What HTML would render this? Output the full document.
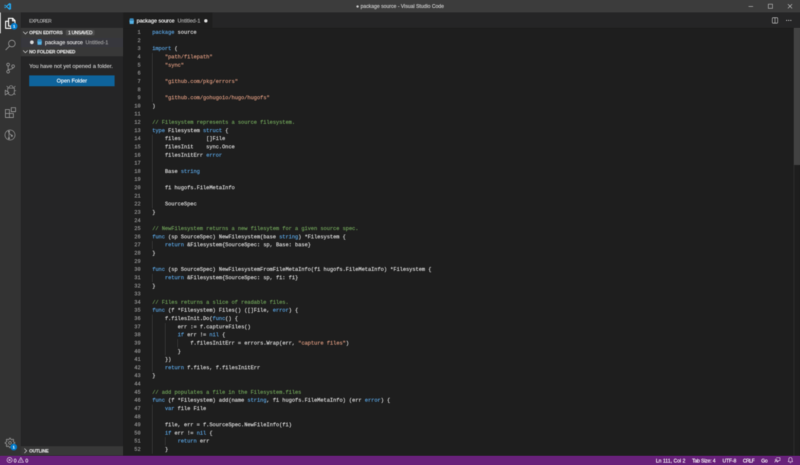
<!DOCTYPE html>
<html lang="en">
<head>
<meta charset="utf-8">
<title>package source - Visual Studio Code</title>
<style>
html,body{margin:0;padding:0;background:#1e1e1e;overflow:hidden;width:800px;height:465px}
#app{position:absolute;left:0;top:0;width:1920px;height:1116px;transform:scale(0.4166667);transform-origin:0 0;will-change:transform;
 font-family:"Liberation Sans",sans-serif;font-size:13px;color:#ccc;background:#1e1e1e;overflow:hidden}
#app *{box-sizing:border-box}
#under,#inner,#icons,#badges{position:absolute;left:0;top:0;width:1920px;height:1116px}
#inner{-webkit-text-stroke:0.3px}
#code,#title,#act,#side,#tabs,#ed,#status{filter:blur(0.85px)}
#icons svg,#badges{filter:blur(0.85px)}
#badges{-webkit-text-stroke:0.3px}
.abs{position:absolute}
/* title bar */
#title{left:0;top:0;width:1920px;height:30px;background:#3c3c3cfe}
#title .txt{left:0;width:1920px;top:0;height:30px;line-height:30px;text-align:center;font-size:12.2px;color:#cccccc;white-space:pre}
/* activity bar */
#act{left:0;top:30px;width:50px;height:1064px;background:#333333fe}
#act .ind{left:0;top:0;width:2px;height:50px;background:#fffffffe}
.badge{position:absolute;width:16px;height:16px;border-radius:8px;background:#007accfe;color:#fff;font-size:9px;line-height:16px;text-align:center;font-weight:bold}
/* sidebar */
#side{left:50px;top:30px;width:246px;height:1064px;background:#252526fe}
#side .hd{left:0;width:246px;height:22px;background:#383838fe;font-size:11px;font-weight:bold;color:#ddd;line-height:22px;white-space:pre;letter-spacing:-0.22px}
#side .hd b{position:absolute;left:20px;top:0}
/* editor */
#tabs{left:296px;top:30px;width:1624px;height:37px;background:#252526fe}
#tab{left:0;top:0;width:214px;height:37px;background:#1e1e1efe}
#ed{left:296px;top:67px;width:1624px;height:1027px;background:#1e1e1efe}
.ln{-webkit-text-stroke:0.45px;position:absolute;left:0;width:1920px;height:19.625px;line-height:19.625px;font-family:"Liberation Mono",monospace;font-size:12.708px;color:#d4d4d4;white-space:pre}
.ln .n{position:absolute;right:calc(1920px - 337.5px);top:0;color:#8e8e8e}
.ln .t{position:absolute;top:0}
.ln .g{position:absolute;top:0;width:1px;height:100%;background:#4e4e4efe}
.k{color:#569cd6}.s{color:#ce9178}.c{color:#6a9955}
/* status */
#status{left:0;top:1094px;width:1920px;height:22px;background:#68217afe;color:#fff;font-size:12px;line-height:24px;white-space:pre}
#status span{position:absolute;top:0}
</style>
</head>
<body>
<div id="app">
<div id="under">
  <div class="abs" style="left:0;top:0;width:1920px;height:30px;background:#3c3c3c"></div>
  <div class="abs" style="left:0;top:30px;width:50px;height:1064px;background:#333333"></div>
  <div class="abs" style="left:50px;top:30px;width:246px;height:1064px;background:#252526"></div>
  <div class="abs" style="left:296px;top:30px;width:1624px;height:37px;background:#252526"></div>
  <div class="abs" style="left:1905px;top:67px;width:15px;height:329px;background:#424242"></div>
  <div class="abs" style="left:0;top:1094px;width:1920px;height:22px;background:#68217a"></div>
</div>
<div id="inner">

<!-- TITLE BAR -->
<div id="title" class="abs">
  <div class="txt abs">● package source - Visual Studio Code</div>
</div>

<!-- ACTIVITY BAR -->
<div id="act" class="abs">
  <div class="ind abs"></div>
</div>

<!-- SIDEBAR -->
<div id="side" class="abs">
  <div class="abs" style="left:20px;top:11.500px;font-size:11px;letter-spacing:-0.85px;color:#bbbbbb;line-height:16px">EXPLORER</div>
  <div class="hd abs" style="top:37px;height:24px">
    <b>OPEN EDITORS</b>
    <span class="abs" style="left:108px;top:5px;height:13px;width:69px;background:#4d4d4dfe;border-radius:2px;line-height:13px;text-align:center;font-size:11px;letter-spacing:-0.4px;font-weight:normal;color:#fff">1 UNSAVED</span>
  </div>
  <div class="abs" style="left:0;top:61px;width:246px;height:22px;background:#37373dfe;line-height:22px;white-space:pre">
    <span class="abs" style="left:22px;top:6px;width:9px;height:9px;border-radius:5px;background:#d8d8d8fe"></span>
    <span class="abs" style="left:58px;top:0;font-size:12.9px;color:#e0e0e0">package source</span>
    <span class="abs" style="left:155px;top:0;font-size:12.8px;color:#a0a0a0">Untitled-1</span>
  </div>
  <div class="hd abs" style="top:83px">
    <b>NO FOLDER OPENED</b>
  </div>
  <div class="abs" style="left:20px;top:119.500px;line-height:18px;font-size:13.5px;color:#cccccc;white-space:pre">You have not yet opened a folder.</div>
  <div class="abs" style="left:20px;top:151px;width:205px;height:26px;background:#0e639cfe;color:#fff;text-align:center;line-height:26px;font-size:13.1px">Open Folder</div>
  <div class="hd abs" style="top:1041px">
    <b>OUTLINE</b>
  </div>
</div>

<!-- TABS -->
<div id="tabs" class="abs">
  <div id="tab" class="abs">
    <span class="abs" style="left:32px;top:0;line-height:40px;font-size:12.9px;color:#ffffff;white-space:pre">package source</span>
    <span class="abs" style="left:130px;top:0;line-height:40px;font-size:12.8px;color:#b0b0b0;white-space:pre">Untitled-1</span>
    <span class="abs" style="left:193.500px;top:15.500px;width:8px;height:8px;border-radius:4px;background:#e0e0e0fe"></span>
  </div>
</div>

<!-- EDITOR -->
<div id="ed" class="abs">
  <div class="abs" style="left:1609px;top:0;width:1px;height:1027px;background:#3a3a3afe"></div>
  <div class="abs" style="left:1609px;top:0;width:15px;height:329px;background:#424242fe"></div>
</div>
<div id="code" class="abs" style="left:0;top:0">
<div class="ln" style="top:68.20px"><span class="n">1</span><span class="t" style="left:365.40px"><span class="k">package</span> source</span></div>
<div class="ln" style="top:87.83px"><span class="n">2</span><span class="t" style="left:365.40px"></span></div>
<div class="ln" style="top:107.45px"><span class="n">3</span><span class="t" style="left:365.40px"><span class="k">import</span> (</span></div>
<div class="ln" style="top:127.08px"><span class="n">4</span><i class="g" style="left:365.40px"></i><span class="t" style="left:395.90px"><span class="s">&quot;path/filepath&quot;</span></span></div>
<div class="ln" style="top:146.70px"><span class="n">5</span><i class="g" style="left:365.40px"></i><span class="t" style="left:395.90px"><span class="s">&quot;sync&quot;</span></span></div>
<div class="ln" style="top:166.32px"><span class="n">6</span><i class="g" style="left:365.40px"></i><span class="t" style="left:365.40px"></span></div>
<div class="ln" style="top:185.95px"><span class="n">7</span><i class="g" style="left:365.40px"></i><span class="t" style="left:395.90px"><span class="s">&quot;github.com/pkg/errors&quot;</span></span></div>
<div class="ln" style="top:205.57px"><span class="n">8</span><i class="g" style="left:365.40px"></i><span class="t" style="left:365.40px"></span></div>
<div class="ln" style="top:225.20px"><span class="n">9</span><i class="g" style="left:365.40px"></i><span class="t" style="left:395.90px"><span class="s">&quot;github.com/gohugoio/hugo/hugofs&quot;</span></span></div>
<div class="ln" style="top:244.82px"><span class="n">10</span><span class="t" style="left:365.40px">)</span></div>
<div class="ln" style="top:264.45px"><span class="n">11</span><span class="t" style="left:365.40px"></span></div>
<div class="ln" style="top:284.07px"><span class="n">12</span><span class="t" style="left:365.40px"><span class="c">// Filesystem represents a source filesystem.</span></span></div>
<div class="ln" style="top:303.70px"><span class="n">13</span><span class="t" style="left:365.40px"><span class="k">type</span> Filesystem <span class="k">struct</span> {</span></div>
<div class="ln" style="top:323.32px"><span class="n">14</span><i class="g" style="left:365.40px"></i><span class="t" style="left:395.90px">files        []File</span></div>
<div class="ln" style="top:342.95px"><span class="n">15</span><i class="g" style="left:365.40px"></i><span class="t" style="left:395.90px">filesInit    sync.Once</span></div>
<div class="ln" style="top:362.57px"><span class="n">16</span><i class="g" style="left:365.40px"></i><span class="t" style="left:395.90px">filesInitErr <span class="k">error</span></span></div>
<div class="ln" style="top:382.20px"><span class="n">17</span><i class="g" style="left:365.40px"></i><span class="t" style="left:365.40px"></span></div>
<div class="ln" style="top:401.82px"><span class="n">18</span><i class="g" style="left:365.40px"></i><span class="t" style="left:395.90px">Base <span class="k">string</span></span></div>
<div class="ln" style="top:421.45px"><span class="n">19</span><i class="g" style="left:365.40px"></i><span class="t" style="left:365.40px"></span></div>
<div class="ln" style="top:441.07px"><span class="n">20</span><i class="g" style="left:365.40px"></i><span class="t" style="left:395.90px">fi hugofs.FileMetaInfo</span></div>
<div class="ln" style="top:460.70px"><span class="n">21</span><i class="g" style="left:365.40px"></i><span class="t" style="left:365.40px"></span></div>
<div class="ln" style="top:480.32px"><span class="n">22</span><i class="g" style="left:365.40px"></i><span class="t" style="left:395.90px">SourceSpec</span></div>
<div class="ln" style="top:499.95px"><span class="n">23</span><span class="t" style="left:365.40px">}</span></div>
<div class="ln" style="top:519.58px"><span class="n">24</span><span class="t" style="left:365.40px"></span></div>
<div class="ln" style="top:539.20px"><span class="n">25</span><span class="t" style="left:365.40px"><span class="c">// NewFilesystem returns a new filesytem for a given source spec.</span></span></div>
<div class="ln" style="top:558.83px"><span class="n">26</span><span class="t" style="left:365.40px"><span class="k">func</span> (sp SourceSpec) NewFilesystem(base <span class="k">string</span>) *Filesystem {</span></div>
<div class="ln" style="top:578.45px"><span class="n">27</span><i class="g" style="left:365.40px"></i><span class="t" style="left:395.90px"><span class="k">return</span> &amp;Filesystem{SourceSpec: sp, Base: base}</span></div>
<div class="ln" style="top:598.08px"><span class="n">28</span><span class="t" style="left:365.40px">}</span></div>
<div class="ln" style="top:617.70px"><span class="n">29</span><span class="t" style="left:365.40px"></span></div>
<div class="ln" style="top:637.33px"><span class="n">30</span><span class="t" style="left:365.40px"><span class="k">func</span> (sp SourceSpec) NewFilesystemFromFileMetaInfo(fi hugofs.FileMetaInfo) *Filesystem {</span></div>
<div class="ln" style="top:656.95px"><span class="n">31</span><i class="g" style="left:365.40px"></i><span class="t" style="left:395.90px"><span class="k">return</span> &amp;Filesystem{SourceSpec: sp, fi: fi}</span></div>
<div class="ln" style="top:676.58px"><span class="n">32</span><span class="t" style="left:365.40px">}</span></div>
<div class="ln" style="top:696.20px"><span class="n">33</span><span class="t" style="left:365.40px"></span></div>
<div class="ln" style="top:715.83px"><span class="n">34</span><span class="t" style="left:365.40px"><span class="c">// Files returns a slice of readable files.</span></span></div>
<div class="ln" style="top:735.45px"><span class="n">35</span><span class="t" style="left:365.40px"><span class="k">func</span> (f *Filesystem) Files() ([]File, <span class="k">error</span>) {</span></div>
<div class="ln" style="top:755.08px"><span class="n">36</span><i class="g" style="left:365.40px"></i><span class="t" style="left:395.90px">f.filesInit.Do(<span class="k">func</span>() {</span></div>
<div class="ln" style="top:774.70px"><span class="n">37</span><i class="g" style="left:365.40px"></i><i class="g" style="left:395.90px"></i><span class="t" style="left:426.40px">err := f.captureFiles()</span></div>
<div class="ln" style="top:794.33px"><span class="n">38</span><i class="g" style="left:365.40px"></i><i class="g" style="left:395.90px"></i><span class="t" style="left:426.40px"><span class="k">if</span> err != <span class="k">nil</span> {</span></div>
<div class="ln" style="top:813.95px"><span class="n">39</span><i class="g" style="left:365.40px"></i><i class="g" style="left:395.90px"></i><i class="g" style="left:426.40px"></i><span class="t" style="left:456.90px">f.filesInitErr = errors.Wrap(err, <span class="s">&quot;capture files&quot;</span>)</span></div>
<div class="ln" style="top:833.58px"><span class="n">40</span><i class="g" style="left:365.40px"></i><i class="g" style="left:395.90px"></i><span class="t" style="left:426.40px">}</span></div>
<div class="ln" style="top:853.20px"><span class="n">41</span><i class="g" style="left:365.40px"></i><span class="t" style="left:395.90px">})</span></div>
<div class="ln" style="top:872.83px"><span class="n">42</span><i class="g" style="left:365.40px"></i><span class="t" style="left:395.90px"><span class="k">return</span> f.files, f.filesInitErr</span></div>
<div class="ln" style="top:892.45px"><span class="n">43</span><span class="t" style="left:365.40px">}</span></div>
<div class="ln" style="top:912.08px"><span class="n">44</span><span class="t" style="left:365.40px"></span></div>
<div class="ln" style="top:931.70px"><span class="n">45</span><span class="t" style="left:365.40px"><span class="c">// add populates a file in the Filesystem.files</span></span></div>
<div class="ln" style="top:951.33px"><span class="n">46</span><span class="t" style="left:365.40px"><span class="k">func</span> (f *Filesystem) add(name <span class="k">string</span>, fi hugofs.FileMetaInfo) (err <span class="k">error</span>) {</span></div>
<div class="ln" style="top:970.95px"><span class="n">47</span><i class="g" style="left:365.40px"></i><span class="t" style="left:395.90px"><span class="k">var</span> file File</span></div>
<div class="ln" style="top:990.58px"><span class="n">48</span><i class="g" style="left:365.40px"></i><span class="t" style="left:365.40px"></span></div>
<div class="ln" style="top:1010.20px"><span class="n">49</span><i class="g" style="left:365.40px"></i><span class="t" style="left:395.90px">file, err = f.SourceSpec.NewFileInfo(fi)</span></div>
<div class="ln" style="top:1029.83px"><span class="n">50</span><i class="g" style="left:365.40px"></i><span class="t" style="left:395.90px"><span class="k">if</span> err != <span class="k">nil</span> {</span></div>
<div class="ln" style="top:1049.45px"><span class="n">51</span><i class="g" style="left:365.40px"></i><i class="g" style="left:395.90px"></i><span class="t" style="left:426.40px"><span class="k">return</span> err</span></div>
<div class="ln" style="top:1069.08px"><span class="n">52</span><i class="g" style="left:365.40px"></i><span class="t" style="left:395.90px">}</span></div>
</div>

<!-- STATUS BAR -->
<div id="status" class="abs">
  <span style="left:33px">0</span>
  <span style="left:61px">0</span>
  <span style="left:1574px;letter-spacing:0.1px">Ln 111, Col 2</span>
  <span style="left:1661px;letter-spacing:-0.3px">Tab Size: 4</span>
  <span style="left:1734px;letter-spacing:-0.2px">UTF-8</span>
  <span style="left:1783px;letter-spacing:-1px">CRLF</span>
  <span style="left:1827px;letter-spacing:-0.5px">Go</span>
</div>

</div>
<div id="icons">
  <svg class="abs" style="left:10.200px;top:7.300px" width="17" height="17" viewBox="0 0 100 100"><path fill="#25a8f0" fill-rule="evenodd" d="M73 1 97 12V88L73 99 33 60 14 75 2 69V31l12-6 19 15zM74 26V74L41 50zM6 66V34L28 50z"/></svg>
  <svg class="abs" style="left:1782px;top:0px" width="138" height="30" viewBox="0 0 138 30" fill="none" stroke="#d0d0d0" stroke-width="1.2">
    <path d="M14.500 15.500h11"/>
    <rect x="62" y="10" width="10" height="10"/>
    <path d="M109 10l10 10M119 10l-10 10"/>
  </svg>
  <svg class="abs" style="left:9px;top:39px" width="32" height="32" viewBox="0 0 32 32" fill="none" stroke="#fff" stroke-width="2.500" stroke-linejoin="round">
    <path d="M11.500 5h10l5.500 5.500v13h-15.500z"/><path d="M21 5v6h6"/><path d="M11.500 12h-7v17h13v-5.500"/>
  </svg>
  <svg class="abs" style="left:9px;top:92px" width="32" height="32" viewBox="0 0 32 32" fill="none" stroke="#999" stroke-width="1.8">
    <circle cx="19.5" cy="12.5" r="8"/><path d="M14 18.5 4.5 28"/>
  </svg>
  <svg class="abs" style="left:9px;top:147px" width="32" height="32" viewBox="0 0 32 32" fill="none" stroke="#999" stroke-width="1.800">
    <circle cx="10.500" cy="8" r="3.300"/><circle cx="10.500" cy="25" r="3.300"/><circle cx="22.500" cy="12" r="3.300"/><path d="M10.500 11.300v10.400M22.500 15.300c0 5.500-12 2.500-12 6.400"/>
  </svg>
  <svg class="abs" style="left:9px;top:201px" width="32" height="32" viewBox="0 0 32 32" fill="none" stroke="#999" stroke-width="1.700" stroke-linejoin="round">
    <path d="M12.500 10.500a5 6 0 0 1 10 0"/><path d="M9.500 10.500h16v9a8 8 0 0 1-16 0z"/><path d="M7 5.500l3.500 3.500M28 5.500l-3.500 3.500M25.500 16.500H29.500M24.500 23.500l3.500 2.500"/><path d="M3.500 15.500v11.500l9-5.750z" fill="#333"/>
  </svg>
  <svg class="abs" style="left:9px;top:255px" width="32" height="32" viewBox="0 0 32 32" fill="none" stroke="#999" stroke-width="1.800" stroke-linejoin="round">
    <path d="M4 7.800h9.600v9.600h9.600v9.600h-19.200zM13.600 17.400v9.600M4 17.400h9.600"/><rect x="18" y="3.300" width="10.400" height="9.700"/>
  </svg>
  <svg class="abs" style="left:8.3px;top:308px" width="32" height="32" viewBox="0 0 32 32" fill="none" stroke="#999" stroke-width="1.600">
    <circle cx="16" cy="16" r="12"/><path d="M13.500 8.500v15M13.500 11c1 4 6 3 7 7"/><circle cx="13.500" cy="8" r="1.600" fill="#999"/><circle cx="13.500" cy="24" r="1.600" fill="#999"/><circle cx="20.500" cy="18" r="1.600" fill="#999"/>
  </svg>
  <svg class="abs" style="left:9px;top:1047px" width="32" height="32" viewBox="0 0 32 32" fill="none" stroke="#999" stroke-width="1.700" stroke-linejoin="round">
    <path d="M23.36 13.99L26.50 14.46L26.50 17.54L23.36 18.01L22.33 20.49L24.22 23.04L22.04 25.22L19.49 23.33L17.01 24.36L16.54 27.50L13.46 27.50L12.99 24.36L10.51 23.33L7.96 25.22L5.78 23.04L7.67 20.49L6.64 18.01L3.50 17.54L3.50 14.46L6.64 13.99L7.67 11.51L5.78 8.96L7.96 6.78L10.51 8.67L12.99 7.64L13.46 4.50L16.54 4.50L17.01 7.64L19.49 8.67L22.04 6.78L24.22 8.96L22.33 11.51z"/><circle cx="15" cy="16" r="3.300"/>
  </svg>
  <svg class="abs" style="left:53px;top:71px" width="16" height="16" viewBox="0 0 16 16" fill="none" stroke="#d0d0d0" stroke-width="1.600"><path d="M2.500 5 8 10.500 13.500 5"/></svg>
  <svg class="abs" style="left:89px;top:92.500px" width="12" height="15" viewBox="0 0 12 15"><path fill="#3a8dc0" d="M3.200 1h5.600a2.200 2.200 0 0 1 2.200 2.200V5H1V3.200A2.200 2.200 0 0 1 3.200 1z"/><path fill="#55b2e6" d="M.4 5.400h11.200l-.9 9.100H1.300z"/><path fill="#2d7db0" d="M3 5.400h6v1.200H3z"/></svg>
  <svg class="abs" style="left:53px;top:116px" width="16" height="16" viewBox="0 0 16 16" fill="none" stroke="#d0d0d0" stroke-width="1.600"><path d="M2.500 5 8 10.500 13.500 5"/></svg>
  <svg class="abs" style="left:53px;top:1074px" width="16" height="16" viewBox="0 0 16 16" fill="none" stroke="#d0d0d0" stroke-width="1.600"><path d="M5.500 2.500 11 8 5.500 13.500"/></svg>
  <svg class="abs" style="left:310px;top:42.700px" width="12" height="15" viewBox="0 0 12 15"><path fill="#3a8dc0" d="M3.200 1h5.600a2.200 2.200 0 0 1 2.200 2.200V5H1V3.200A2.200 2.200 0 0 1 3.200 1z"/><path fill="#55b2e6" d="M.4 5.400h11.200l-.9 9.100H1.300z"/><path fill="#2d7db0" d="M3 5.400h6v1.200H3z"/></svg>
  <svg class="abs" style="left:1851px;top:40px" width="18" height="18" viewBox="0 0 18 18" fill="none" stroke="#d4d4d4" stroke-width="1.300"><rect x="2.500" y="2.500" width="13" height="13" rx="1.500"/><path d="M9 2.500v13"/></svg>
  <svg class="abs" style="left:1884px;top:40px" width="18" height="18" viewBox="0 0 18 18" fill="#d4d4d4"><circle cx="4" cy="9" r="1.300"/><circle cx="9" cy="9" r="1.300"/><circle cx="14" cy="9" r="1.300"/></svg>
  <svg class="abs" style="left:15px;top:1096px" width="16" height="16" viewBox="0 0 16 16" fill="none" stroke="#fff" stroke-width="1.200"><circle cx="8" cy="8" r="6.200"/><path d="M5.600 5.600l4.800 4.800M10.400 5.600l-4.800 4.800"/></svg>
  <svg class="abs" style="left:42px;top:1096px" width="16" height="16" viewBox="0 0 16 16" fill="none" stroke="#fff" stroke-width="1.200" stroke-linejoin="round"><path d="M8 2 14.500 13.500h-13z"/><path d="M8 6.500v3.500M8 11v1.200"/></svg>
  <svg class="abs" style="left:1858px;top:1096px" width="16" height="16" viewBox="0 0 16 16" fill="none" stroke="#fff" stroke-width="1.200" stroke-linejoin="round"><path d="M5 2.500h9v7h-3l-2.500 2.500v-2.500H8"/><circle cx="4.500" cy="7.500" r="2"/><path d="M1.500 14c0-2.500 1.300-3.500 3-3.500s3 1 3 3.500"/></svg>
  <svg class="abs" style="left:1889px;top:1096px" width="16" height="16" viewBox="0 0 16 16" fill="none" stroke="#fff" stroke-width="1.200" stroke-linejoin="round"><path d="M8 2c-2.500 0-4 1.800-4 4.500v3L2.500 12h11L12 9.500v-3C12 3.800 10.500 2 8 2z"/><path d="M6.500 13.500a1.500 1.500 0 0 0 3 0"/></svg>
</div>
<div id="badges">
  <div class="badge" style="left:26px;top:55px">1</div>
  <div class="badge" style="left:25px;top:1065px">1</div>
</div>
</div>
</body>
</html>
